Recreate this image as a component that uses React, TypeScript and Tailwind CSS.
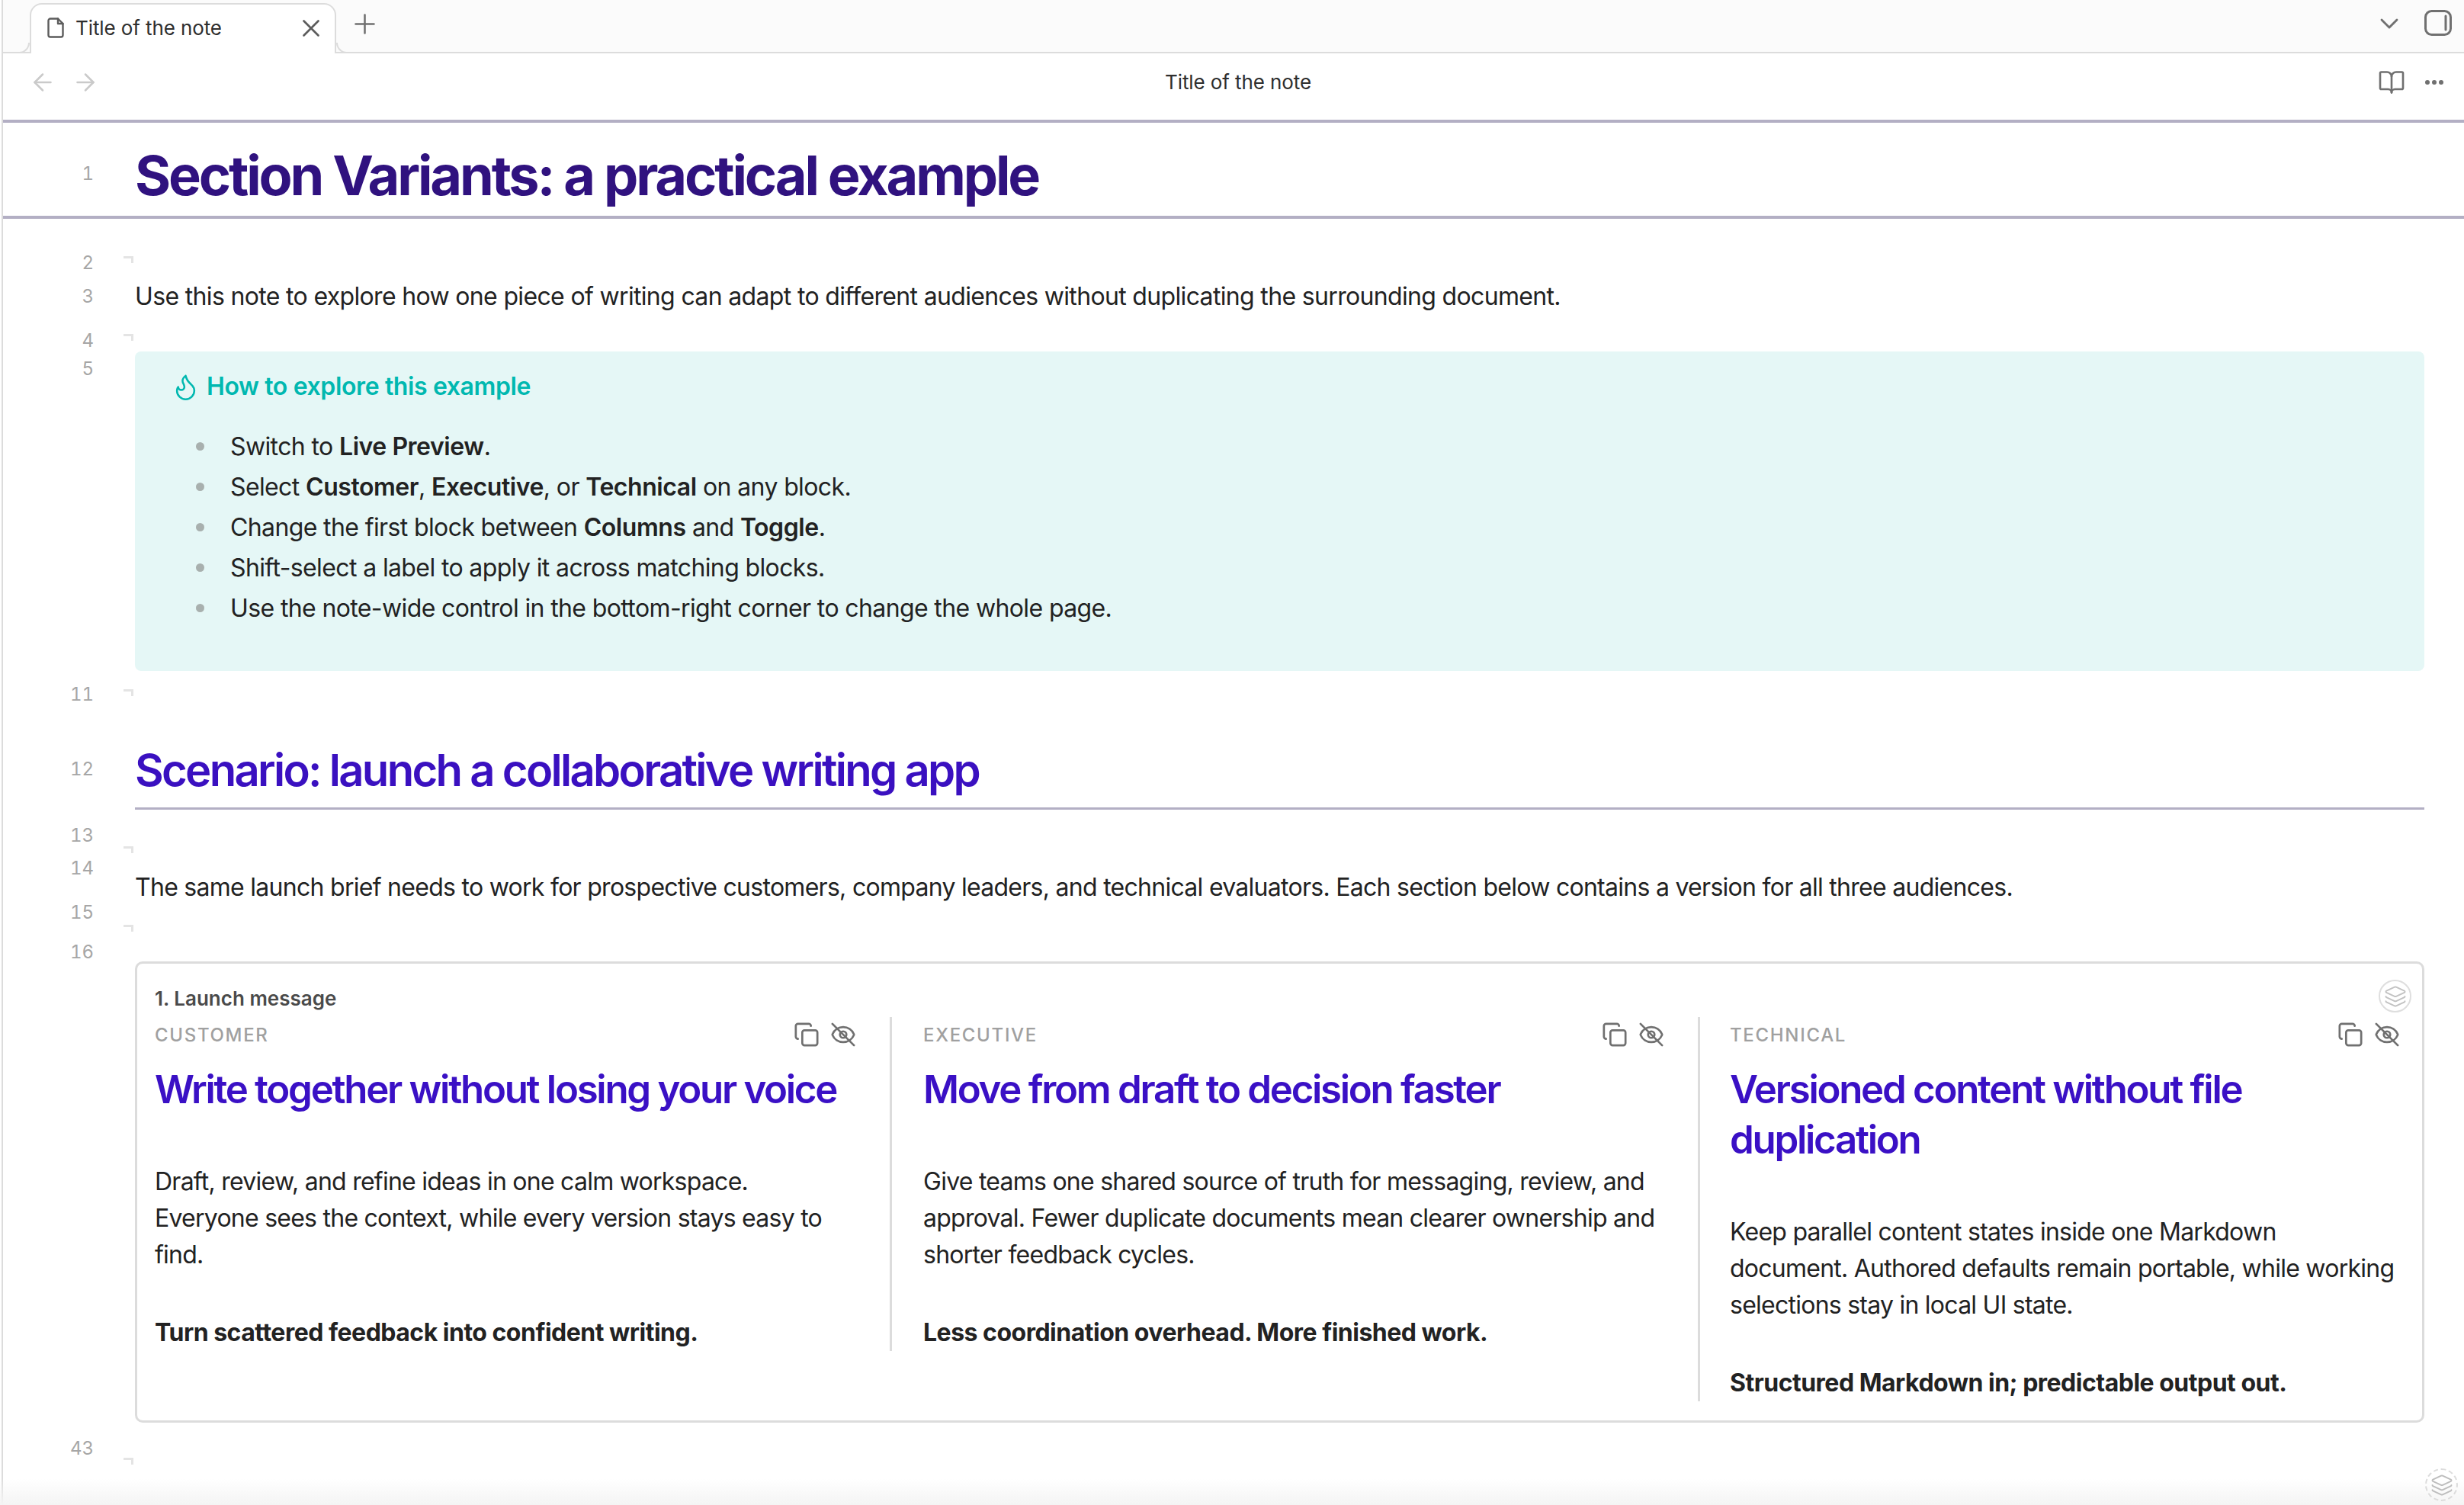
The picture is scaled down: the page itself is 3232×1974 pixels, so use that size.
import { ArrowLeft, ArrowRight, BookOpen, ChevronDown, Copy, Flame, Layers, Plus, X } from "lucide-react";

function EyeOffIcon() {
  return (
    <svg width="34" height="34" viewBox="0 0 24 24" fill="none" stroke="#707070" strokeWidth="1.9" strokeLinecap="round" strokeLinejoin="round">
      <path d="M2.062 12.348a1 1 0 0 1 0-.696 10.75 10.75 0 0 1 19.876 0 1 1 0 0 1 0 .696 10.75 10.75 0 0 1-19.876 0" />
      <circle cx="12" cy="12" r="3" />
      <line x1="2" y1="2" x2="22" y2="22" />
    </svg>
  );
}

function DocIcon() {
  return (
    <svg width="22" height="27" viewBox="0 0 22 27" fill="none" stroke="#5c5c5c" strokeWidth="2.4" strokeLinejoin="round" strokeLinecap="round">
      <path d="M4 1.5h10l6.5 6.5v15a2.5 2.5 0 0 1-2.5 2.5H4a2.5 2.5 0 0 1-2.5-2.5V4A2.5 2.5 0 0 1 4 1.5z" />
      <path d="M14 1.5V8h6.5" />
    </svg>
  );
}

function PanelIcon() {
  return (
    <svg width="36" height="34" viewBox="0 0 36 34" fill="none" stroke="#707070" strokeWidth="3" strokeLinecap="round">
      <rect x="1.5" y="1.5" width="33" height="31" rx="8" />
      <line x1="28" y1="8" x2="28" y2="26" />
    </svg>
  );
}

function DotsIcon() {
  return (
    <svg width="26" height="8" viewBox="0 0 26 8" fill="#707070">
      <circle cx="4" cy="4" r="3" />
      <circle cx="13" cy="4" r="3" />
      <circle cx="22" cy="4" r="3" />
    </svg>
  );
}

function Num({ n, className }: { n: string; className: string }) {
  return <div className={`h-[30px] text-right text-[24px] leading-[30px] text-[#a6a6a6] tabular-nums ${className}`}>{n}</div>;
}

function Marker({ className }: { className: string }) {
  return <div className={`h-[9px] w-[13px] border-t-[3px] border-r-[3px] border-[#e4e4e4] ${className}`} />;
}

function ColHead({ label }: { label: string }) {
  return (
    <div className="flex h-[48px] items-center">
      <span className="flex-1 text-[24px] font-medium tracking-[0.07em] text-[#a0a0a0]">{label}</span>
      <span className="-mt-[2px] flex items-center gap-[14px]">
        <Copy size={34} strokeWidth={1.9} color="#707070" />
        <EyeOffIcon />
      </span>
    </div>
  );
}

function ColBody({ head, lines, strong }: { head: string[]; lines: string[]; strong: string }) {
  return (
    <>
      <h3 className="mt-[14px] text-[51px] leading-[66px] font-semibold tracking-[-2.3px] whitespace-nowrap text-[#3a10c5]">
        {head.map((h) => (
          <div key={h}>{h}</div>
        ))}
      </h3>
      <div className="mt-[64px]">
        {lines.map((l) => (
          <div key={l} className="h-[48px] text-[32px] leading-[48px] tracking-[-0.75px] whitespace-nowrap">
            {l}
          </div>
        ))}
      </div>
      <div className="mt-[54px] h-[48px] text-[32px] leading-[48px] font-bold tracking-[-0.5px] whitespace-nowrap">{strong}</div>
    </>
  );
}

function B({ children }: { children: React.ReactNode }) {
  return <b className="font-semibold tracking-[-0.45px]">{children}</b>;
}

function Li({ children }: { children: React.ReactNode }) {
  return (
    <li className="flex h-[53px] items-center tracking-[-0.62px]">
      <span className="ml-[80px] size-[11px] rounded-full bg-[#a8b0ae]" />
      <span className="ml-[34px]">{children}</span>
    </li>
  );
}

export default function App() {
  return (
    <div className="relative h-[1974px] w-[3232px] overflow-hidden bg-white pl-[2px] [font-family:Inter,sans-serif] text-[#222222]">
      <div className="h-full border-l-2 border-[#dcdcdc]">
        {/* tab bar */}
        <div className="flex h-[70px] items-start border-b-2 border-[#dcdcdc] bg-[#fbfbfb] pt-[4px] pl-[35px]">
          <div className="relative z-10 flex h-[66px] w-[402px] items-center rounded-t-[16px] border-2 border-b-0 border-[#dcdcdc] bg-white pr-[20px] pb-[3px] pl-[21px]">
            <DocIcon />
            <span className="ml-[15px] flex-1 text-[26px] leading-[36px] tracking-[-0.1px] text-[#2e2e2e]">Title of the note</span>
            <X size={38} strokeWidth={1.7} color="#5c5c5c" className="-mr-[8px]" />
            <div className="absolute -bottom-[0px] -left-[16px] size-[14px] rounded-br-[14px] border-r-2 border-b-2 border-[#dcdcdc]" />
            <div className="absolute -right-[16px] -bottom-[0px] size-[14px] rounded-bl-[14px] border-b-2 border-l-2 border-[#dcdcdc]" />
          </div>
          <Plus size={41} strokeWidth={1.5} color="#707070" className="mt-[7px] ml-[17px]" />
          <div className="flex-1" />
          <ChevronDown size={40} strokeWidth={1.7} color="#707070" className="mt-[7px] mr-[26px]" />
          <div className="mt-[9px] mr-[16px]">
            <PanelIcon />
          </div>
        </div>
        {/* nav bar */}
        <div className="relative flex h-[91px] items-center border-b-4 border-[#b3afc4] pr-[26px] pb-[12px] pl-[34px]">
          <ArrowLeft size={36} strokeWidth={1.7} color="#cacaca" />
          <ArrowRight size={36} strokeWidth={1.7} color="#cacaca" className="ml-[20px]" />
          <div className="flex-1 pr-[3px] text-center text-[26px] tracking-[-0.1px] text-[#2e2e2e]">Title of the note</div>
          <BookOpen size={36} strokeWidth={1.75} color="#707070" className="-ml-[2px]" />
          <span className="ml-[25px]">
            <DotsIcon />
          </span>
        </div>
        {/* title row */}
        <div className="flex h-[126px] border-b-4 border-[#b3afc4]">
          <div className="w-[119px] pt-[52px]">
            <Num n="1" className="" />
          </div>
          <h1 className="pt-[23px] pl-[54px] text-[72px] leading-[92px] font-bold tracking-[-3.14px] whitespace-nowrap text-[#30127f]">
            Section Variants: a practical example
          </h1>
        </div>
        {/* editor */}
        <div className="flex">
          <div className="w-[119px] shrink-0">
            <Num n="2" className="mt-[43px]" />
            <Num n="3" className="mt-[14px]" />
            <Num n="4" className="mt-[28px]" />
            <Num n="5" className="mt-[7px]" />
            <Num n="11" className="mt-[397px]" />
            <Num n="12" className="mt-[68px]" />
            <Num n="13" className="mt-[57px]" />
            <Num n="14" className="mt-[13px]" />
            <Num n="15" className="mt-[28px]" />
            <Num n="16" className="mt-[22px]" />
            <Num n="43" className="mt-[621px]" />
          </div>
          <div className="ml-[39px] w-[13px] shrink-0">
            <Marker className="mt-[49px]" />
            <Marker className="mt-[93px]" />
            <Marker className="mt-[457px]" />
            <Marker className="mt-[197px]" />
            <Marker className="mt-[94px]" />
            <Marker className="mt-[690px]" />
          </div>
          <div className="ml-[2px] w-[3003px] shrink-0">
            <p className="mt-[78px] text-[32px] leading-[48px] tracking-[-0.66px]">
              Use this note to explore how one piece of writing can adapt to different audiences without duplicating the surrounding document.
            </p>
            <div className="mt-[48px] h-[419px] rounded-[8px] bg-[#e5f7f6] pt-[22px] text-[32px] leading-[48px]">
              <div className="flex items-center pl-[47px] font-semibold tracking-[-0.38px] text-[#00b8b0]">
                <Flame size={39} strokeWidth={1.55} color="#00b8b0" />
                <span className="ml-[8px]">How to explore this example</span>
              </div>
              <ul className="mt-[28px]">
                <Li>
                  Switch to <B>Live Preview</B>.
                </Li>
                <Li>
                  Select <B>Customer</B>, <B>Executive</B>, or <B>Technical</B> on any block.
                </Li>
                <Li>
                  Change the first block between <B>Columns</B> and <B>Toggle</B>.
                </Li>
                <Li>Shift-select a label to apply it across matching blocks.</Li>
                <Li>Use the note-wide control in the bottom-right corner to change the whole page.</Li>
              </ul>
            </div>
            <h2 className="mt-[91px] border-b-[3px] border-[#b3afc4] pb-[10px] text-[58px] leading-[78px] font-semibold tracking-[-2.7px] text-[#3a10c0]">
              Scenario: launch a collaborative writing app
            </h2>
            <p className="mt-[78px] text-[32px] leading-[48px] tracking-[-0.72px]">
              The same launch brief needs to work for prospective customers, company leaders, and technical evaluators. Each section below contains a version for all three audiences.
            </p>
            <div className="relative mt-[73px] h-[605px] rounded-[10px] border-[3px] border-[#dcdcdc] pt-[28px] pr-[22px] pl-[23px]">
              <div className="h-[36px] text-[26px] leading-[36px] font-semibold text-[#4a4a4a]">1. Launch message</div>
              <div className="mt-[6px] grid grid-cols-[967px_1057px_921px] items-start">
                <div className="border-r-[3px] border-[#dcdcdc] pr-[44px]">
                  <ColHead label="CUSTOMER" />
                  <ColBody
                    head={["Write together without losing your voice"]}
                    lines={["Draft, review, and refine ideas in one calm workspace.", "Everyone sees the context, while every version stays easy to", "find."]}
                    strong="Turn scattered feedback into confident writing."
                  />
                </div>
                <div className="pr-[44px] pl-[41px]">
                  <ColHead label="EXECUTIVE" />
                  <ColBody
                    head={["Move from draft to decision faster"]}
                    lines={["Give teams one shared source of truth for messaging, review, and", "approval. Fewer duplicate documents mean clearer ownership and", "shorter feedback cycles."]}
                    strong="Less coordination overhead. More finished work."
                  />
                </div>
                <div className="border-l-[3px] border-[#dcdcdc] pl-[39px]">
                  <ColHead label="TECHNICAL" />
                  <ColBody
                    head={["Versioned content without file", "duplication"]}
                    lines={["Keep parallel content states inside one Markdown", "document. Authored defaults remain portable, while working", "selections stay in local UI state."]}
                    strong="Structured Markdown in; predictable output out."
                  />
                </div>
              </div>
              <div className="absolute top-[21px] right-[14px] flex size-[43px] items-center justify-center rounded-full border-2 border-[#dedede]">
                <Layers size={30} strokeWidth={1.5} color="#c2c2c2" />
              </div>
            </div>
          </div>
        </div>
      </div>
      <div className="absolute right-0 bottom-0 left-0 h-[34px] bg-gradient-to-b from-[#ffffff00] to-[#f4f4f4]" />
      <div className="absolute right-[8px] bottom-[5px] flex size-[43px] items-center justify-center rounded-full border-2 border-dashed border-[#dcdcdc]">
        <Layers size={30} strokeWidth={1.5} color="#bdbdbd" />
      </div>
    </div>
  );
}
